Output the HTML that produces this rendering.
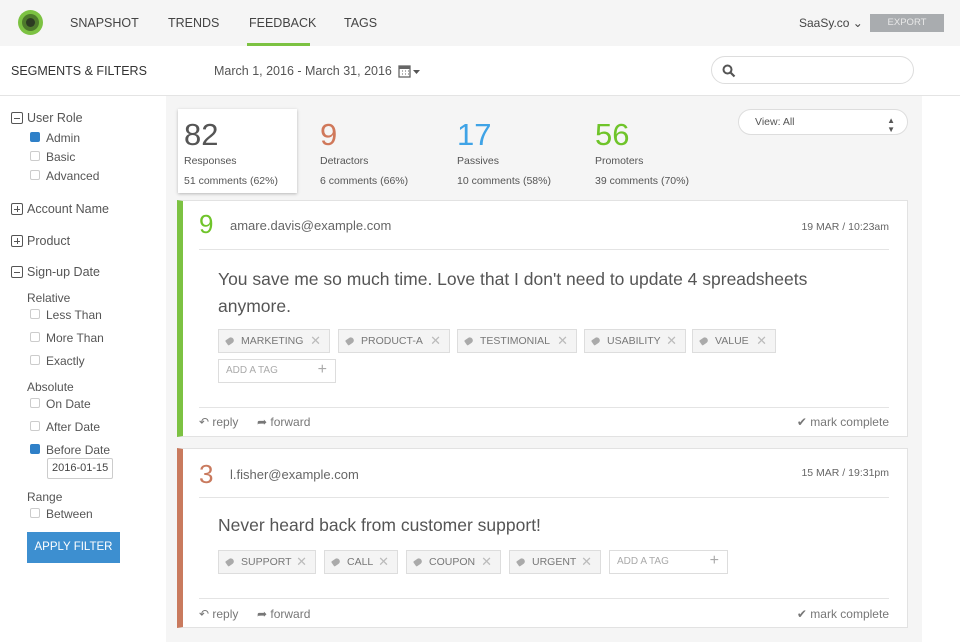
<!DOCTYPE html>
<html><head><style>
*{margin:0;padding:0;box-sizing:border-box}
body{width:960px;height:642px;overflow:hidden;background:#fff;font-family:"Liberation Sans",sans-serif;color:#555;position:relative}
.a{position:absolute;white-space:nowrap}
.nav{font-size:12.5px;color:#444;top:16px}
.cb{position:absolute;width:10px;height:10px;border:1px solid #ccc;border-radius:2px;background:#fff}
.cb.on{background:#2f80c8;border-color:#2f80c8}
.lbl{font-size:12px;color:#555}
.pm{position:absolute;width:12px;height:12px;border:1.3px solid #555;border-radius:2px}
.pm:before{content:"";position:absolute;left:2px;right:2px;top:4.5px;height:1.3px;background:#555}
.pm.p:after{content:"";position:absolute;top:2px;bottom:2px;left:4.5px;width:1.3px;background:#555}
.card{position:absolute;left:177px;width:731px;background:#fff;border:1px solid #e2e2e2}
.tag{position:absolute;height:24px;border:1px solid #ddd;background:#f4f4f4;font-size:10.5px;color:#777;line-height:22px;padding-left:22px}
.tag:before{content:"";position:absolute;left:7px;top:8px;width:8px;height:6px;background:#aaa;border-radius:1px 3px 3px 1px;transform:rotate(-35deg)}
.tag i{font-style:normal;color:#bbb;font-size:13px;position:absolute;right:8px;top:0}
.hr{position:absolute;left:16px;right:18px;height:1px;background:#e4e4e4}
.sm{font-size:12px;color:#777}
</style></head><body>
<div class="a" style="left:0;top:0;width:960px;height:46px;background:#f5f5f5"></div>
<div class="a" style="left:18px;top:10px;width:25px;height:25px;border-radius:50%;background:#7cc242"></div>
<div class="a" style="left:22px;top:14px;width:17px;height:17px;border-radius:50%;background:#4d7a2b"></div>
<div class="a" style="left:26px;top:18px;width:9px;height:9px;border-radius:50%;background:#2c3b22"></div>
<div class="a nav" style="left:70px">SNAPSHOT</div>
<div class="a nav" style="left:168px">TRENDS</div>
<div class="a nav" style="left:249px">FEEDBACK</div>
<div class="a nav" style="left:344px">TAGS</div>
<div class="a" style="left:247px;top:43px;width:63px;height:3px;background:#7cc242"></div>
<div class="a" style="left:799px;top:16px;font-size:12px;color:#444">SaaSy.co &#8964;</div>
<div class="a" style="left:870px;top:14px;width:74px;height:18px;background:#a9acaf;color:#e8e8e8;font-size:9.5px;text-align:center;line-height:18px">EXPORT</div>

<div class="a" style="left:0;top:95px;width:960px;height:1px;background:#e4e4e4"></div>
<div class="a" style="left:11px;top:64px;font-size:12.5px;color:#333">SEGMENTS &amp; FILTERS</div>
<div class="a" style="left:214px;top:64px;font-size:12.5px;color:#555">March 1, 2016 - March 31, 2016</div>
<svg class="a" style="left:398px;top:64px" width="24" height="14"><rect x="1" y="2" width="11" height="11" fill="none" stroke="#666" stroke-width="1.3"/><rect x="1" y="2" width="11" height="3" fill="#666"/><path d="M4 7h1M7 7h1M10 7h1M4 10h1M7 10h1M10 10h1" stroke="#666"/><path d="M15 6h7l-3.5 4z" fill="#555"/></svg>
<div class="a" style="left:711px;top:56px;width:203px;height:28px;border:1px solid #ddd;border-radius:14px;background:#fff"></div>
<svg class="a" style="left:722px;top:64px" width="14" height="14"><circle cx="5.5" cy="5.5" r="4" fill="none" stroke="#555" stroke-width="2"/><path d="M8.5 8.5l4 4" stroke="#555" stroke-width="2.2"/></svg>

<div class="a" style="left:166px;top:96px;width:756px;height:546px;background:#f5f5f5"></div>

<!-- sidebar -->
<div class="pm" style="left:11px;top:112px"></div><div class="a" style="left:27px;top:111px;font-size:12.5px;color:#555">User Role</div>
<div class="cb on" style="left:30px;top:132px"></div><div class="a lbl" style="left:46px;top:131px">Admin</div>
<div class="cb" style="left:30px;top:151px"></div><div class="a lbl" style="left:46px;top:150px">Basic</div>
<div class="cb" style="left:30px;top:170px"></div><div class="a lbl" style="left:46px;top:169px">Advanced</div>
<div class="pm p" style="left:11px;top:203px"></div><div class="a" style="left:27px;top:202px;font-size:12.5px">Account Name</div>
<div class="pm p" style="left:11px;top:235px"></div><div class="a" style="left:27px;top:234px;font-size:12.5px">Product</div>
<div class="pm" style="left:11px;top:266px"></div><div class="a" style="left:27px;top:265px;font-size:12.5px">Sign-up Date</div>
<div class="a lbl" style="left:27px;top:291px">Relative</div>
<div class="cb" style="left:30px;top:309px"></div><div class="a lbl" style="left:46px;top:308px">Less Than</div>
<div class="cb" style="left:30px;top:332px"></div><div class="a lbl" style="left:46px;top:331px">More Than</div>
<div class="cb" style="left:30px;top:355px"></div><div class="a lbl" style="left:46px;top:354px">Exactly</div>
<div class="a lbl" style="left:27px;top:380px">Absolute</div>
<div class="cb" style="left:30px;top:398px"></div><div class="a lbl" style="left:46px;top:397px">On Date</div>
<div class="cb" style="left:30px;top:421px"></div><div class="a lbl" style="left:46px;top:420px">After Date</div>
<div class="cb on" style="left:30px;top:444px"></div><div class="a lbl" style="left:46px;top:443px">Before Date</div>
<div class="a" style="left:47px;top:458px;width:66px;height:21px;border:1px solid #ccc;border-radius:2px;font-size:11px;color:#444;line-height:19px;padding-left:4px">2016-01-15</div>
<div class="a lbl" style="left:27px;top:490px">Range</div>
<div class="cb" style="left:30px;top:508px"></div><div class="a lbl" style="left:46px;top:507px">Between</div>
<div class="a" style="left:27px;top:532px;width:93px;height:31px;background:#3d8fd0;color:#fff;font-size:11.5px;text-align:center;line-height:31px">APPLY FILTER</div>

<!-- stats -->
<div class="a" style="left:178px;top:109px;width:119px;height:84px;background:#fff;box-shadow:0 1px 3px rgba(0,0,0,.25)"></div>
<div class="a" style="left:184px;top:117px;font-size:31px;color:#555">82</div>
<div class="a" style="left:184px;top:155px;font-size:10.5px;color:#555">Responses</div>
<div class="a" style="left:184px;top:175px;font-size:10.5px;color:#555">51 comments (62%)</div>
<div class="a" style="left:320px;top:117px;font-size:31px;color:#d0785a">9</div>
<div class="a" style="left:320px;top:155px;font-size:10.5px">Detractors</div>
<div class="a" style="left:320px;top:175px;font-size:10.5px">6 comments (66%)</div>
<div class="a" style="left:457px;top:117px;font-size:31px;color:#3fa3e6">17</div>
<div class="a" style="left:457px;top:155px;font-size:10.5px">Passives</div>
<div class="a" style="left:457px;top:175px;font-size:10.5px">10 comments (58%)</div>
<div class="a" style="left:595px;top:117px;font-size:31px;color:#6fc42a">56</div>
<div class="a" style="left:595px;top:155px;font-size:10.5px">Promoters</div>
<div class="a" style="left:595px;top:175px;font-size:10.5px">39 comments (70%)</div>
<div class="a" style="left:738px;top:109px;width:170px;height:26px;border:1px solid #ddd;border-radius:13px;background:#fff;font-size:10.5px;color:#555;line-height:24px;padding-left:16px">View: All<span style="position:absolute;right:12px;top:-1px;font-size:8px">&#9650;<br></span><span style="position:absolute;right:12px;top:8px;font-size:8px">&#9660;</span></div>

<!-- card 1 -->
<div class="card" style="top:200px;height:237px;border-left:6px solid #7cc242">
<div class="a" style="left:16px;top:8px;font-size:26px;color:#6fc42a">9</div>
<div class="a" style="left:47px;top:17px;font-size:13px;color:#666">amare.davis@example.com</div>
<div class="a" style="right:18px;top:20px;font-size:10.5px;color:#666">19 MAR / 10:23am</div>
<div class="hr" style="top:48px"></div>
<div class="a" style="left:35px;top:65px;font-size:17.5px;color:#555;line-height:27px">You save me so much time. Love that I don't need to update 4 spreadsheets<br>anymore.</div>
<div class="tag" style="left:35px;top:128px;width:112px">MARKETING<i>✕</i></div>
<div class="tag" style="left:155px;top:128px;width:112px">PRODUCT-A<i>✕</i></div>
<div class="tag" style="left:274px;top:128px;width:120px">TESTIMONIAL<i>✕</i></div>
<div class="tag" style="left:401px;top:128px;width:102px">USABILITY<i>✕</i></div>
<div class="tag" style="left:509px;top:128px;width:84px">VALUE<i>✕</i></div>
<div class="a" style="left:35px;top:158px;width:118px;height:24px;border:1px solid #ddd;font-size:10px;color:#aaa;line-height:22px;padding-left:7px">ADD A TAG<span style="position:absolute;right:8px;top:-1px;font-size:16px;color:#aaa">+</span></div>
<div class="hr" style="top:206px"></div>
<div class="a sm" style="left:16px;top:214px">&#8630; reply</div>
<div class="a sm" style="left:74px;top:214px">&#10150; forward</div>
<div class="a sm" style="right:18px;top:214px">&#10004; mark complete</div>
</div>

<!-- card 2 -->
<div class="card" style="top:448px;height:180px;border-left:6px solid #c97a5e">
<div class="a" style="left:16px;top:10px;font-size:26px;color:#c97a5e">3</div>
<div class="a" style="left:47px;top:18px;font-size:13px;color:#666">l.fisher@example.com</div>
<div class="a" style="right:18px;top:18px;font-size:10.5px;color:#666">15 MAR / 19:31pm</div>
<div class="hr" style="top:48px"></div>
<div class="a" style="left:35px;top:66px;font-size:17.5px;color:#555">Never heard back from customer support!</div>
<div class="tag" style="left:35px;top:101px;width:98px">SUPPORT<i>✕</i></div>
<div class="tag" style="left:141px;top:101px;width:74px">CALL<i>✕</i></div>
<div class="tag" style="left:223px;top:101px;width:95px">COUPON<i>✕</i></div>
<div class="tag" style="left:326px;top:101px;width:92px">URGENT<i>✕</i></div>
<div class="a" style="left:426px;top:101px;width:119px;height:24px;border:1px solid #ddd;font-size:10px;color:#aaa;line-height:22px;padding-left:7px">ADD A TAG<span style="position:absolute;right:8px;top:-1px;font-size:16px;color:#aaa">+</span></div>
<div class="hr" style="top:149px"></div>
<div class="a sm" style="left:16px;top:158px">&#8630; reply</div>
<div class="a sm" style="left:74px;top:158px">&#10150; forward</div>
<div class="a sm" style="right:18px;top:158px">&#10004; mark complete</div>
</div>
</body></html>
